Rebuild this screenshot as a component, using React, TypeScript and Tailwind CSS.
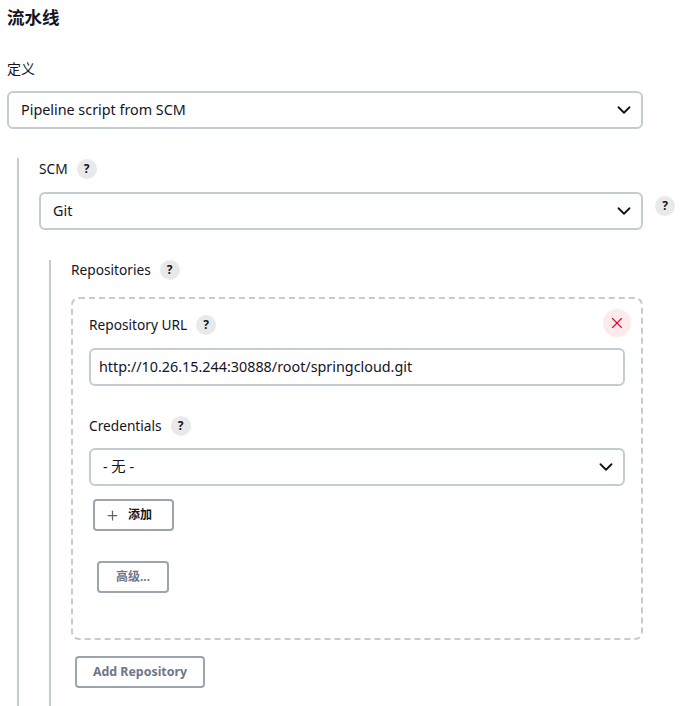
import { ChevronDown, Plus, X } from 'lucide-react';

const font = { fontFamily: '"Noto Sans", "Noto Sans CJK SC", sans-serif' };

const HelpDot = () => {
    return (
        <span className="flex w-5 h-5 rounded-full bg-[#e9e9ea] items-center justify-center text-[12px] font-bold text-[#14141f] leading-none">?</span>
    );
};

const Label = ({ text }: { text: string }) => {
    return (
        <div className="flex items-center h-5 gap-[9px]">
            <span className="text-[13.7px] leading-5 text-[#14141f]">{text}</span>
            <HelpDot />
        </div>
    );
};

const Select = ({ value }: { value: string }) => {
    return (
        <div className="flex items-center justify-between h-[38px] border-2 border-[#c3ccd1] rounded-md pl-3 pr-[6px] bg-white">
            <span className="text-[14.35px] leading-5 text-[#14141f]">{value}</span>
            <ChevronDown size={22} strokeWidth={2} className="text-[#14141f]" />
        </div>
    );
};

export default function App() {
    return (
        <div style={font} className="w-[682px] h-[706px] overflow-hidden bg-white pl-[7px] text-[#14141f]">
            {/* heading */}
            <h2 className="h-[36px] text-[17.5px] leading-[34px] font-bold">流水线</h2>

            <div className="w-[636px] mt-[24px]">
                <div className="h-[20px] text-[14px] leading-[18px]">定义</div>
                <div className="mt-[11px]">
                    <Select value="Pipeline script from SCM" />
                </div>
            </div>

            {/* scm block */}
            <div className="ml-[10px] mt-[29px] border-l-2 border-[#c3ccd1] pl-5 pt-[1px] h-[600px]">
                <Label text="SCM" />
                <div className="flex mt-[13px]">
                    <div className="w-[604px] shrink-0">
                        <Select value="Git" />
                    </div>
                    <div className="ml-3 mt-1">
                        <HelpDot />
                    </div>
                </div>

                {/* repositories */}
                <div className="ml-[10px] mt-[30px] border-l-2 border-[#c3ccd1] pl-5 h-[450px]">
                    <Label text="Repositories" />

                    <div className="relative w-[572px] h-[343px] mt-[17px] border-2 border-dashed border-[#c3ccd1] rounded-lg pl-4 pr-4 pt-[16px]">
                        <button className="absolute right-[10px] top-[10px] w-7 h-7 rounded-full bg-[#fdeaec] flex items-center justify-center">
                            <X size={18} strokeWidth={1.5} className="text-[#e6002e]" />
                        </button>

                        <Label text="Repository URL" />
                        <div className="flex items-center h-[38px] mt-[13px] border-2 border-[#c3ccd1] rounded-md pl-2 leading-5 text-[14.35px]">
                            http://10.26.15.244:30888/root/springcloud.git
                        </div>

                        <div className="mt-[30px]">
                            <Label text="Credentials" />
                        </div>
                        <div className="mt-[12px]">
                            <Select value="- 无 -" />
                        </div>

                        <button className="flex items-center w-[81px] h-8 mt-[13px] ml-1 border-2 border-[#9aa5af] rounded pl-[10px] text-[12px] font-bold">
                            <Plus size={15} strokeWidth={2} className="text-[#5c6570]" />
                            <span className="ml-[8px]">添加</span>
                        </button>

                        <button className="flex items-center justify-center w-[72px] h-8 mt-[30px] ml-2 border-2 border-[#9aa5af] rounded text-[12px] font-bold text-[#6f7687]">
                            高级...
                        </button>
                    </div>

                    <button className="flex items-center justify-center w-[130px] h-8 mt-4 ml-1 border-2 border-[#9aa5af] rounded text-[12.4px] font-bold text-[#6f7687]">
                        Add Repository
                    </button>
                </div>
            </div>
        </div>
    );
}
